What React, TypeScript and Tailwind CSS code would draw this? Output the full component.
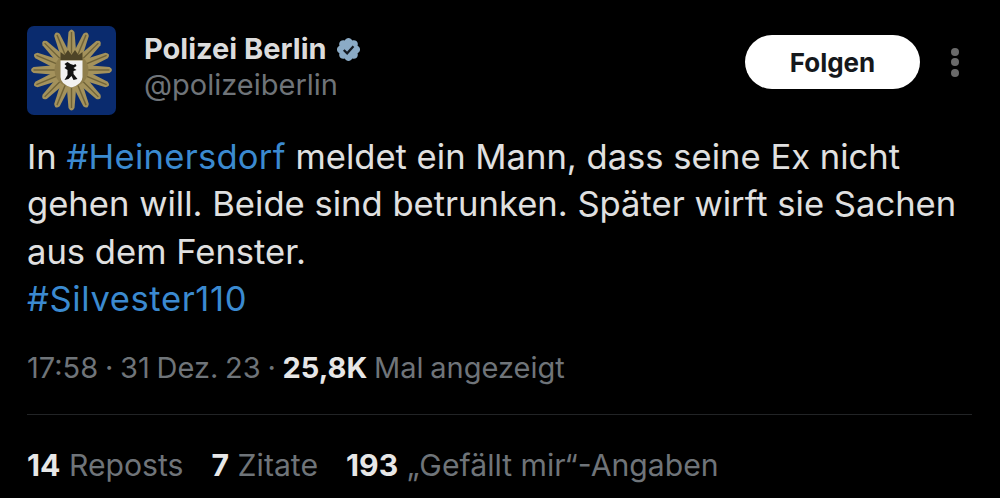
const rays = Array.from({ length: 16 }, (_, i) => i * 22.5);

function Badge() {
  return (
    <svg width="89" height="89" viewBox="0 0 89 89" className="shrink-0">
      <rect width="89" height="89" rx="7" fill="#0a2b6e" />
      <g transform="translate(44.5 44)">
        {rays.map((a) => (
          <g key={a} transform={`rotate(${a})`}>
            <path d="M-5.5 -8 L-3 -38 Q0 -43 3 -38 L5.5 -8 Z" fill="#a4925c" />
            <path d="M0 -12 L0 -38" stroke="#6f6238" strokeWidth="1.4" />
          </g>
        ))}
        <circle r="17" fill="#8f7e4c" />
        <path d="M-11 -18 L-11 -10 L11 -10 L11 -18 L7 -15 L3.5 -20 L0 -15 L-3.5 -20 L-7 -15 Z" fill="#4e4427" />
        <path d="M-11 -9.5 H11 V7 Q11 14 0 17.5 Q-11 14 -11 7 Z" fill="#f2f2f2" />
        <path d="M-7 -6 L-4 -8 L-1 -6 L2 -5 L4 -6 L5 -4 L2 -2 L5 0 L2 1 L2 4 L6 9 L2 10 L0 6 L-3 9 L-7 10 L-4 5 L-4 0 L-7 -2 L-5 -4 Z" fill="#111" />
      </g>
    </svg>
  );
}

function Verified() {
  return (
    <svg width="27" height="27" viewBox="0 0 24 24">
      <path
        fill="#8babc6"
        d="M22.25 12c0-1.43-.88-2.67-2.19-3.34.46-1.39.2-2.9-.81-3.91s-2.52-1.27-3.91-.81c-.66-1.31-1.91-2.19-3.34-2.19s-2.67.88-3.33 2.19c-1.4-.46-2.91-.2-3.92.81s-1.26 2.52-.8 3.91c-1.31.67-2.2 1.91-2.2 3.34s.89 2.67 2.2 3.34c-.46 1.39-.21 2.9.8 3.91s2.52 1.26 3.91.81c.67 1.31 1.91 2.19 3.34 2.19s2.68-.88 3.34-2.19c1.39.45 2.9.2 3.91-.81s1.27-2.52.81-3.91c1.31-.67 2.19-1.91 2.19-3.34z"
      />
      <path d="M7.8 12.4l3 3 5.6-6.2" fill="none" stroke="#141a22" strokeWidth="2" />
    </svg>
  );
}

export default function App() {
  return (
    <div className="w-[1000px] h-[498px] overflow-hidden bg-black px-[27px] pt-[26px] font-['Inter',sans-serif]">
      {/* Header */}
      <div className="flex items-start">
        <Badge />
        <div className="ml-[28px] mt-[5px] flex-1">
          <div className="flex items-center gap-[8px] h-[36px]">
            <span className="text-[29px] font-bold text-[#dcdcdc]">Polizei Berlin</span>
            <Verified />
          </div>
          <div className="text-[29px] leading-[36px] text-[#6f7479]">@polizeiberlin</div>
        </div>
        <div className="flex items-center mt-[9px]">
          <button className="w-[175px] h-[54px] rounded-full bg-white text-[26px] font-bold text-[#15181c]">Folgen</button>
          <div className="ml-[31px] mr-[14px] flex flex-col gap-[2.5px]">
            <span className="w-[8px] h-[8px] rounded-full bg-[#6a6a6a]" />
            <span className="w-[8px] h-[8px] rounded-full bg-[#6a6a6a]" />
            <span className="w-[8px] h-[8px] rounded-full bg-[#6a6a6a]" />
          </div>
        </div>
      </div>

      {/* Tweet text */}
      <div className="mt-[18px] text-[34.6px] leading-[47.4px] text-[#e0e0e0]">
        <p>
          In <span className="text-[#3b8ad0] tracking-[0.25px]">#Heinersdorf</span> meldet ein Mann, dass seine Ex nicht
        </p>
        <p>gehen will. Beide sind betrunken. Später wirft sie Sachen</p>
        <p>aus dem Fenster.</p>
        <p className="text-[#3b8ad0] tracking-[0.6px]">#Silvester110</p>
      </div>

      {/* Meta */}
      <div className="mt-[25px] text-[29px] leading-[40px] [word-spacing:-1.4px] text-[#6f7479]">
        17:58 · 31 Dez. 23 · <span className="font-bold text-[#e7e7e7]">25,8K</span> Mal angezeigt
      </div>
      <div className="mt-[26px] h-px w-[945px] bg-[#222426]" />

      {/* Stats */}
      <div className="mt-[30px] flex gap-[28px] text-[30.2px] leading-[40px] text-[#6f7479]">
        <span><b className="text-[#e7e7e7]">14</b> Reposts</span>
        <span><b className="text-[#e7e7e7]">7</b> Zitate</span>
        <span><b className="text-[#e7e7e7]">193</b> „Gefällt mir“-Angaben</span>
      </div>
    </div>
  );
}
